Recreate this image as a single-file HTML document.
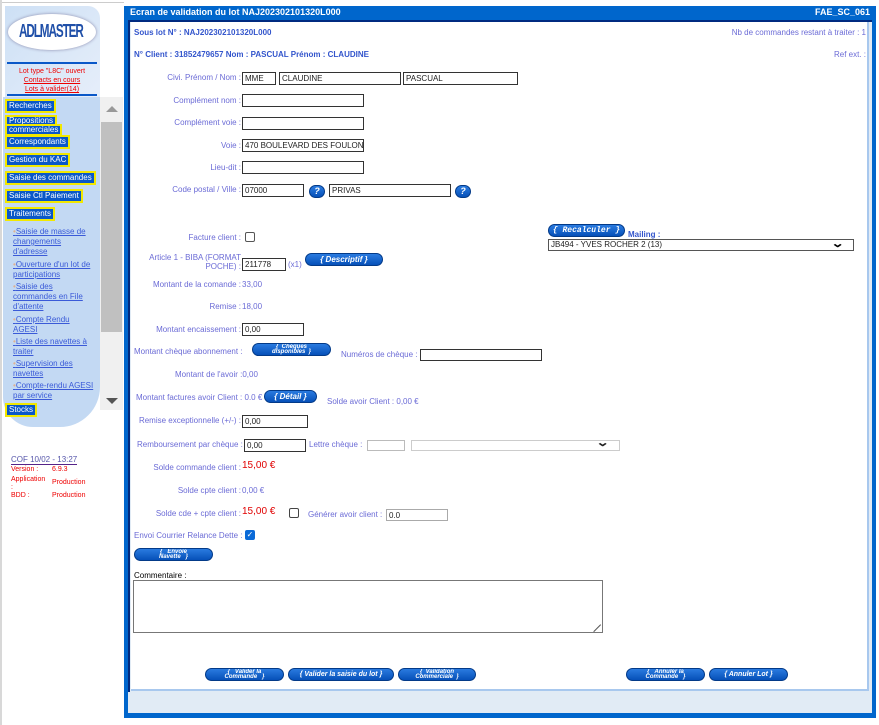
<!DOCTYPE html>
<html><head><meta charset="utf-8">
<style>
*{margin:0;padding:0;box-sizing:border-box}
body{width:879px;height:725px;background:#fff;font-family:"Liberation Sans",Arial,sans-serif;font-size:8px;position:relative;overflow:hidden;color:#6b6bd6}
.a{position:absolute;white-space:nowrap}
.l{position:absolute;right:638px;white-space:nowrap;text-align:right}
.v{position:absolute;left:242px;white-space:nowrap}
.in{position:absolute;height:13px;border:1px solid #333;background:#fff;font-size:8px;color:#222;padding:1px 2px;white-space:nowrap;overflow:hidden}
.btn{position:absolute;height:13px;border-radius:7px;background:linear-gradient(#2a7be0,#0650b8);border:1px solid #033a88;color:#fff;font-style:italic;font-weight:bold;font-size:8px;text-align:center;line-height:11px;white-space:nowrap;overflow:hidden}
.b2{font-size:6px;line-height:5px;padding-top:1px}
.q{position:absolute;width:16px;height:13px;border-radius:7px;background:linear-gradient(#2a7be0,#0650b8);border:1px solid #033a88;color:#fff;font-weight:bold;font-style:italic;font-size:9px;text-align:center;line-height:11px}
.m{position:absolute;left:5px;background:#0a58c8;color:#fff;font-size:8px;border:2px solid #f2e800;padding:0 2px;height:14px;line-height:10px;white-space:nowrap}
.sub{position:absolute;left:13px;width:82px;color:#3a5ad8;text-decoration:underline;font-size:8px;line-height:10px}
.sub:before{content:"\2022 ";color:#e0b090;text-decoration:none}
.r{color:#e00000;font-size:10px}
</style></head><body>
<div class="a" style="left:0;top:2px;width:124px;height:1px;background:#ccc"></div>
<div class="a" style="left:0;top:0;width:2px;height:725px;background:#d8d8d8"></div>
<div class="a" style="left:5px;top:6px;width:95px;height:92px;background:linear-gradient(135deg,#cde0f5,#e6eefa);border-radius:0 12px 0 0"></div>
<div class="a" style="left:8px;top:14px;width:88px;height:36px;border-radius:50%;background:#fff;box-shadow:0 0 3px #88a"></div>
<div class="a" style="left:19px;top:20px;font-size:13px;color:#1f4fa8;font-weight:bold;letter-spacing:-1.2px;transform:scale(0.9,1.4);transform-origin:left top">ADLMASTER</div>
<div class="a" style="left:7px;top:62px;width:90px;height:2px;background:#0a58c8"></div>
<div class="a" style="left:7px;top:67px;width:90px;text-align:center;color:#e00;font-size:7px;line-height:9px">Lot type "L8C" ouvert<br><u>Contacts en cours</u><br><u>Lots à valider(14)</u></div>
<div class="a" style="left:7px;top:94px;width:90px;height:2px;background:#0a58c8"></div>
<div class="a" style="left:3px;top:97px;width:97px;height:330px;background:#c3d9f3;border-radius:0 0 40px 30px"></div>
<div class="a" style="left:100px;top:97px;width:23px;height:313px;background:#f0f0f0"></div>
<div class="a" style="left:101px;top:122px;width:21px;height:210px;background:#c0c0c0"></div>
<div class="a" style="left:106px;top:106px;width:0;height:0;border:6px solid transparent;border-bottom:6px solid #999;border-top:0"></div>
<div class="a" style="left:106px;top:398px;width:0;height:0;border:6px solid transparent;border-top:6px solid #555;border-bottom:0"></div>
<div class="m" style="top:99px">Recherches</div>
<div class="m" style="top:115px;line-height:8px;height:12px;border-bottom:0">Propositions</div>
<div class="m" style="left:5px;top:124px;height:12px;line-height:8px">commerciales</div>
<div class="m" style="top:135px">Correspondants</div>
<div class="m" style="top:153px">Gestion du KAC</div>
<div class="m" style="top:171px">Saisie des commandes</div>
<div class="m" style="top:189px">Saisie Ctl Paiement</div>
<div class="m" style="top:207px">Traitements</div>
<div class="sub" style="top:227px">Saisie de masse de changements d'adresse</div>
<div class="sub" style="top:260px">Ouverture d'un lot de participations</div>
<div class="sub" style="top:282px">Saisie des commandes en File d'attente</div>
<div class="sub" style="top:315px">Compte Rendu AGESI</div>
<div class="sub" style="top:337px">Liste des navettes à traiter</div>
<div class="sub" style="top:359px">Supervision des navettes</div>
<div class="sub" style="top:381px">Compte-rendu AGESI par service</div>
<div class="m" style="top:403px">Stocks</div>
<div class="a" style="left:11px;top:455px;font-size:8px;color:#5555aa;border-bottom:1px solid #552288">COF 10/02 - 13:27</div>
<div class="a" style="left:11px;top:466px;color:#e00;font-size:7px">Version :</div><div class="a" style="left:52px;top:466px;color:#e00;font-size:7px">6.9.3</div>
<div class="a" style="left:11px;top:476px;color:#e00;font-size:7px;line-height:8px">Application<br>:</div><div class="a" style="left:52px;top:479px;color:#e00;font-size:7px">Production</div>
<div class="a" style="left:11px;top:492px;color:#e00;font-size:7px">BDD :</div><div class="a" style="left:52px;top:492px;color:#e00;font-size:7px">Production</div>

<div class="a" style="left:124px;top:6px;width:752px;height:712px;background:#0066cc"></div>
<div class="a" style="left:130px;top:7px;color:#fff;font-weight:bold;font-size:9px">Ecran de validation du lot NAJ202302101320L000</div>
<div class="a" style="left:815px;top:7px;color:#fff;font-weight:bold;font-size:9px">FAE_SC_061</div>
<div class="a" style="left:128px;top:20px;width:744px;height:693px;background:#e1ebf5"></div>
<div class="a" style="left:128px;top:20px;width:744px;height:2px;background:#002a80"></div>
<div class="a" style="left:128px;top:20px;width:2px;height:672px;background:#002a80"></div>
<div class="a" style="left:131px;top:22px;width:738px;height:669px;background:#fff;border-right:2px solid #a8c8ee;border-bottom:2px solid #a8c8ee"></div>

<div class="a" style="left:134px;top:28px;color:#3355cc;font-weight:bold">Sous lot N° : NAJ202302101320L000</div>
<div class="a" style="right:13px;top:28px">Nb de commandes restant à traiter : 1</div>
<div class="a" style="left:134px;top:50px;color:#3355cc;font-weight:bold">N° Client : 31852479657 Nom : PASCUAL Prénom : CLAUDINE</div>
<div class="a" style="right:13px;top:50px">Ref ext. :</div>

<div class="l" style="top:73px">Civi. Prénom / Nom :</div>
<div class="in" style="left:242px;top:72px;width:34px">MME</div>
<div class="in" style="left:279px;top:72px;width:122px">CLAUDINE</div>
<div class="in" style="left:403px;top:72px;width:115px">PASCUAL</div>
<div class="l" style="top:96px">Complément nom :</div>
<div class="in" style="left:242px;top:94px;width:122px"></div>
<div class="l" style="top:118px">Complément voie :</div>
<div class="in" style="left:242px;top:117px;width:122px"></div>
<div class="l" style="top:141px">Voie :</div>
<div class="in" style="left:242px;top:139px;width:122px">470 BOULEVARD DES FOULON</div>
<div class="l" style="top:163px">Lieu-dit :</div>
<div class="in" style="left:242px;top:161px;width:122px"></div>
<div class="l" style="top:185px">Code postal / Ville :</div>
<div class="in" style="left:242px;top:184px;width:62px">07000</div>
<div class="q" style="left:309px;top:185px">?</div>
<div class="in" style="left:329px;top:184px;width:122px">PRIVAS</div>
<div class="q" style="left:455px;top:185px">?</div>

<div class="l" style="top:233px">Facture client :</div>
<div class="a" style="left:245px;top:232px;width:10px;height:10px;border:1px solid #555;border-radius:2px"></div>
<div class="btn" style="left:548px;top:224px;width:77px;font-family:'Liberation Mono',monospace">{ Recalculer }</div>
<div class="a" style="left:628px;top:230px;color:#3355cc;font-weight:bold">Mailing :</div>
<div class="in" style="left:548px;top:239px;width:306px;height:12px;padding-top:0;border-color:#555">JB494 - YVES ROCHER 2 (13)</div>
<div class="a" style="left:833px;top:237px;font-size:11px;color:#000;font-weight:bold;transform:scaleX(1.5)">&#8964;</div>

<div class="l" style="top:253px;line-height:9px">Article 1 - BIBA (FORMAT<br>POCHE) :</div>
<div class="in" style="left:242px;top:258px;width:44px">211778</div>
<div class="a" style="left:288px;top:260px">(x1)</div>
<div class="btn" style="left:305px;top:253px;width:78px">{ Descriptif }</div>

<div class="l" style="top:280px">Montant de la comande :</div><div class="v" style="top:280px">33,00</div>
<div class="l" style="top:302px">Remise :</div><div class="v" style="top:302px">18,00</div>
<div class="l" style="top:325px">Montant encaissement :</div>
<div class="in" style="left:242px;top:323px;width:62px">0,00</div>
<div class="a" style="left:134px;top:347px">Montant chèque abonnement :</div>
<div class="btn b2" style="left:252px;top:343px;width:79px">{&nbsp;&nbsp;Chèques<br>disponibles&nbsp;&nbsp;}</div>
<div class="a" style="left:341px;top:350px">Numéros de chèque :</div>
<div class="in" style="left:420px;top:349px;width:122px;height:12px"></div>
<div class="a" style="left:175px;top:370px">Montant de l'avoir :0,00</div>
<div class="a" style="left:136px;top:393px">Montant factures avoir Client : 0.0 €</div>
<div class="btn" style="left:264px;top:390px;width:53px">{ Détail }</div>
<div class="a" style="left:327px;top:397px">Solde avoir Client : 0,00 €</div>
<div class="l" style="top:416px">Remise exceptionnelle (+/-) :</div>
<div class="in" style="left:242px;top:415px;width:66px">0,00</div>
<div class="a" style="left:137px;top:440px">Remboursement par chèque :</div>
<div class="in" style="left:244px;top:439px;width:62px">0,00</div>
<div class="a" style="left:309px;top:440px">Lettre chèque :</div>
<div class="a" style="left:367px;top:440px;width:38px;height:11px;border:1px solid #bbb"></div>
<div class="a" style="left:411px;top:440px;width:209px;height:11px;border:1px solid #ccc"></div>
<div class="a" style="left:598px;top:436px;font-size:11px;color:#222;font-weight:bold;transform:scaleX(1.5)">&#8964;</div>
<div class="l" style="top:463px">Solde commande client :</div><div class="v r" style="top:460px">15,00 €</div>
<div class="l" style="top:486px">Solde cpte client :</div><div class="v" style="top:486px">0,00 €</div>
<div class="l" style="top:509px">Solde cde + cpte client :</div><div class="v r" style="top:506px">15,00 €</div>
<div class="a" style="left:289px;top:508px;width:10px;height:10px;border:1px solid #444;border-radius:2px"></div>
<div class="a" style="left:308px;top:510px">Générer avoir client :</div>
<div class="in" style="left:386px;top:509px;width:62px;height:12px;border-color:#aaa">0.0</div>
<div class="a" style="left:134px;top:531px">Envoi Courrier Relance Dette :</div>
<div class="a" style="left:245px;top:530px;width:10px;height:10px;background:#0a6ad8;border-radius:2px;color:#fff;font-size:8px;line-height:10px;text-align:center">✓</div>
<div class="btn b2" style="left:134px;top:548px;width:79px">{&nbsp;&nbsp;&nbsp;Envoie<br>Navette&nbsp;&nbsp;&nbsp;}</div>

<div class="a" style="left:134px;top:571px;color:#000">Commentaire :</div>
<div class="a" style="left:133px;top:580px;width:470px;height:53px;border:1px solid #777"></div>
<div class="a" style="left:589px;top:620px;width:10px;height:10px;border-bottom:1px solid #555;transform:rotate(-45deg)"></div>

<div class="btn b2" style="left:205px;top:668px;width:79px">{&nbsp;&nbsp;&nbsp;Valider la<br>Commande&nbsp;&nbsp;&nbsp;}</div>
<div class="btn" style="left:288px;top:668px;width:106px;font-size:7px">{ Valider la saisie du lot }</div>
<div class="btn b2" style="left:398px;top:668px;width:78px">{&nbsp;&nbsp;Validation<br>Commerciale&nbsp;&nbsp;}</div>
<div class="btn b2" style="left:626px;top:668px;width:79px">{&nbsp;&nbsp;&nbsp;Annuler la<br>Commande&nbsp;&nbsp;&nbsp;}</div>
<div class="btn" style="left:709px;top:668px;width:79px;font-size:7px">{ Annuler Lot }</div>
</body></html>
